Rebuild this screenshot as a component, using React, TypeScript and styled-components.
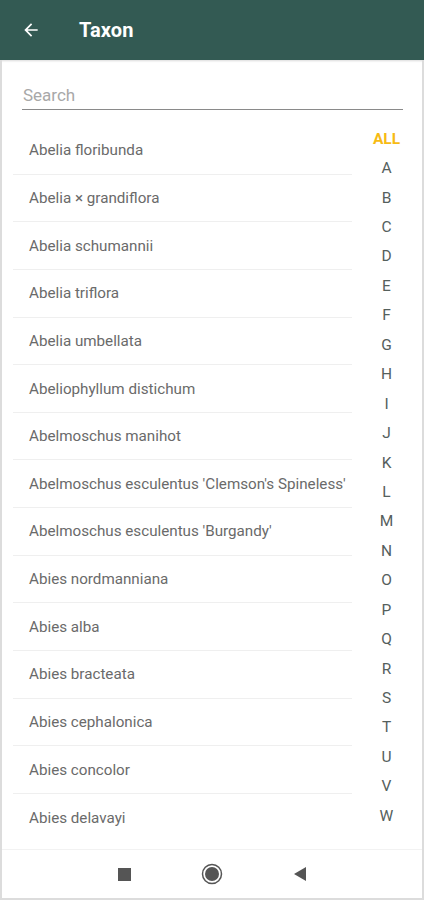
import { createGlobalStyle } from "styled-components";
import styled from "styled-components";

const GlobalStyle = createGlobalStyle`
  html, body {
    margin: 0;
    padding: 0;
    background: #fff;
    font-family: Roboto, "Liberation Sans", sans-serif;
  }
`;

const TAXA = [
  "Abelia floribunda",
  "Abelia × grandiflora",
  "Abelia schumannii",
  "Abelia triflora",
  "Abelia umbellata",
  "Abeliophyllum distichum",
  "Abelmoschus manihot",
  "Abelmoschus esculentus 'Clemson's Spineless'",
  "Abelmoschus esculentus 'Burgandy'",
  "Abies nordmanniana",
  "Abies alba",
  "Abies bracteata",
  "Abies cephalonica",
  "Abies concolor",
  "Abies delavayi",
];

const LETTERS = "ABCDEFGHIJKLMNOPQRSTUVW".split("");

const Screen = styled.div`
  width: 424px;
  height: 900px;
  display: flex;
  flex-direction: column;
  overflow: hidden;
`;

const TopBar = styled.header`
  height: 60px;
  flex: none;
  background: #335a53;
  display: flex;
  align-items: center;
  padding: 0 0 0 20px;
  gap: 37px;
  box-shadow: 0 1px 2px rgba(0, 0, 0, 0.15);
`;

const BackBtn = styled.button`
  border: none;
  background: none;
  padding: 0;
  width: 22px;
  height: 22px;
  display: flex;
  align-items: center;
  justify-content: center;
  cursor: pointer;
`;

const Title = styled.h1`
  margin: 0;
  color: #fff;
  font-size: 20px;
  font-weight: 700;
  letter-spacing: 0.1px;
`;

const Frame = styled.div`
  flex: 1;
  display: flex;
  flex-direction: column;
  border: 2px solid #dcdcdc;
  border-top: none;
  min-height: 0;
`;

const SearchWrap = styled.div`
  padding: 21px 19px 0 20px;
  flex: none;
`;

const SearchInput = styled.input`
  width: 100%;
  box-sizing: border-box;
  border: none;
  border-bottom: 1.5px solid #8a8a8a;
  outline: none;
  font-family: Roboto, "Liberation Sans", sans-serif;
  font-size: 17px;
  color: #333;
  padding: 4px 0 4px 1px;
  background: transparent;
  &::placeholder { color: #a8a8a8; }
`;

const Main = styled.div`
  flex: 1;
  display: grid;
  grid-template-columns: 339px 1fr;
  padding: 17px 0 0 11px;
  min-height: 0;
`;

const List = styled.div`
  display: flex;
  flex-direction: column;
`;

const Row = styled.div`
  height: 47.65px;
  box-sizing: border-box;
  display: flex;
  align-items: center;
  padding-left: 16px;
  font-size: 15.2px;
  color: #6a6a6a;
  border-bottom: 1px solid #efefef;
  white-space: nowrap;
  &:last-child { border-bottom: none; }
`;

const Index = styled.div`
  display: flex;
  flex-direction: column;
  align-items: center;
  margin-top: -3px;
  padding-right: 1px;
`;

const IndexItem = styled.div<{ $active?: boolean }>`
  height: 29.45px;
  display: flex;
  align-items: center;
  justify-content: center;
  font-size: 15.5px;
  font-weight: ${(p) => (p.$active ? 700 : 400)};
  color: ${(p) => (p.$active ? "#f7bb14" : "#55605d")};
`;

const NavBar = styled.nav`
  height: 48px;
  flex: none;
  border-top: 1px solid #f2f2f2;
  display: flex;
  align-items: center;
  justify-content: center;
  gap: 70px;
  padding-right: 0;
`;

const NavSquare = styled.div`
  width: 13px;
  height: 13px;
  background: #555;
`;

export default function App() {
  return (
    <Screen>
      <GlobalStyle />
      <TopBar>
        <BackBtn aria-label="back">
          <svg width="20" height="20" viewBox="0 0 24 24">
            <path d="M20 11H7.83l5.59-5.59L12 4l-8 8 8 8 1.41-1.41L7.83 13H20v-2z" fill="#fff" />
          </svg>
        </BackBtn>
        <Title>Taxon</Title>
      </TopBar>
      <Frame>
        <SearchWrap>
          <SearchInput placeholder="Search" />
        </SearchWrap>
        <Main>
          <List>
            {TAXA.map((t) => (
              <Row key={t}>{t}</Row>
            ))}
          </List>
          <Index>
            <IndexItem $active>ALL</IndexItem>
            {LETTERS.map((l) => (
              <IndexItem key={l}>{l}</IndexItem>
            ))}
          </Index>
        </Main>
        <NavBar>
          <NavSquare />
          <svg width="22" height="22" viewBox="0 0 22 22">
            <circle cx="11" cy="11" r="9.5" fill="none" stroke="#555" strokeWidth="1.5" />
            <circle cx="11" cy="11" r="7" fill="#555" />
          </svg>
          <svg width="14" height="16" viewBox="0 0 14 16">
            <path d="M13 1 L1 8 L13 15 Z" fill="#555" />
          </svg>
        </NavBar>
      </Frame>
    </Screen>
  );
}
